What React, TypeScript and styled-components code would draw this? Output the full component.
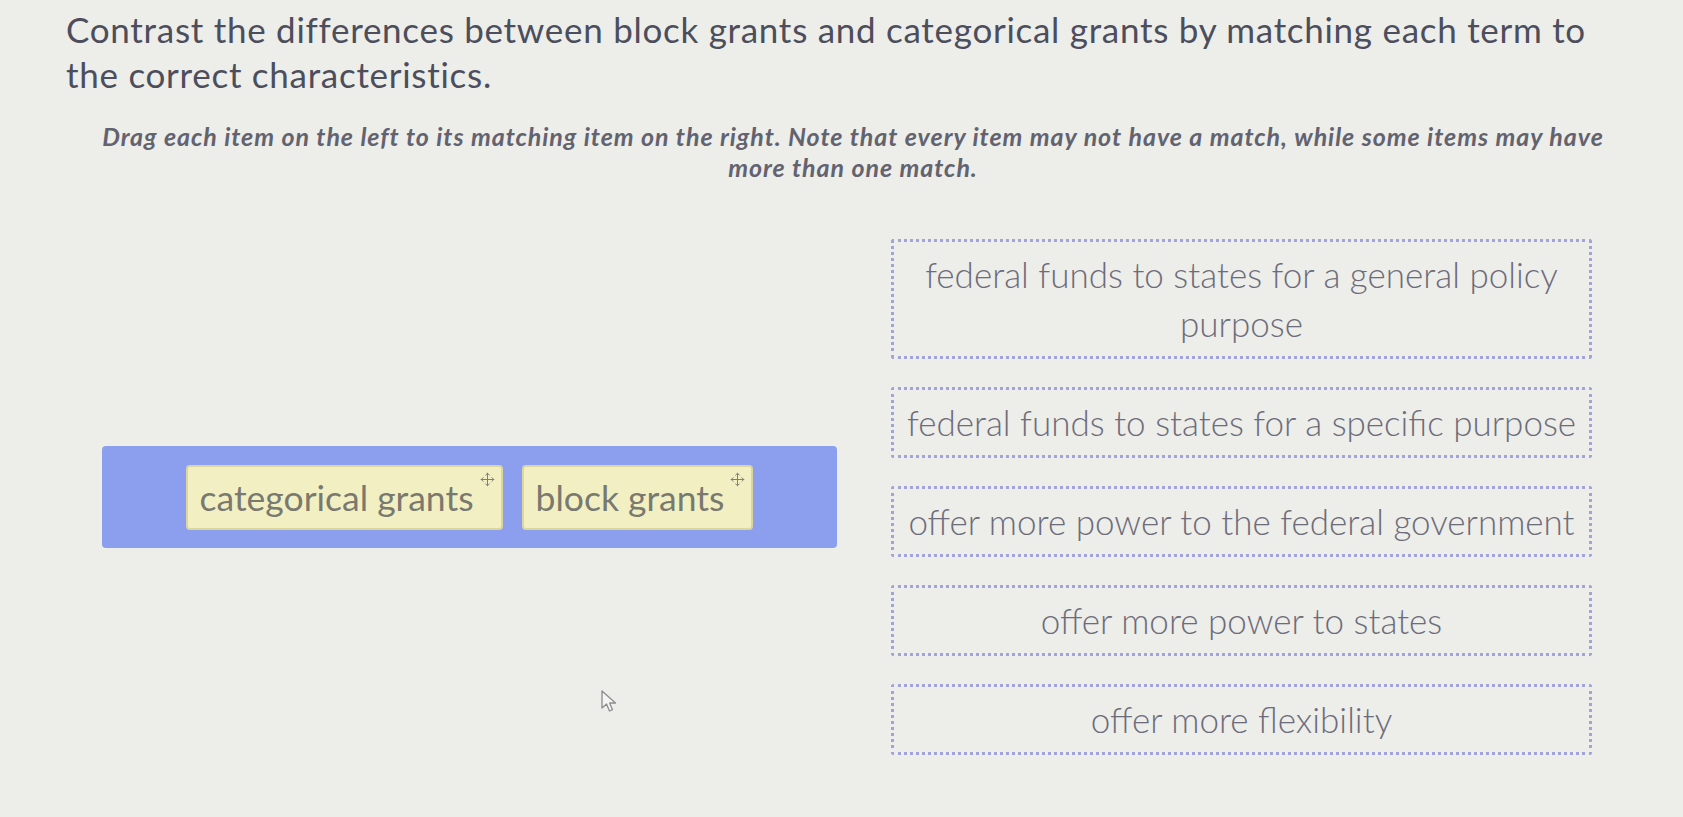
import React from 'react';
import styled, { createGlobalStyle } from 'styled-components';
import { Move } from 'lucide-react';

const GlobalStyle = createGlobalStyle`
  html, body {
    margin: 0;
    padding: 0;
    background: #ededea;
  }
  body {
    font-family: Lato, 'Open Sans', sans-serif;
  }
`;

const Page = styled.main`
  position: relative;
  width: 1574px;
  min-height: 817px;
  padding: 7px 0 0 66px;
  box-sizing: content-box;
`;

const Title = styled.h2`
  margin: 0;
  max-width: 1545px;
  font-size: 35px;
  line-height: 45px;
  letter-spacing: 0.72px;
  font-weight: 400;
  color: #4c4e5c;
`;

const Instructions = styled.p`
  margin: 24px 0 0;
  padding: 0 20px;
  text-align: center;
  font-size: 25px;
  line-height: 31px;
  letter-spacing: 0.95px;
  font-weight: 700;
  font-style: italic;
  color: #62636f;
`;

const MatchArea = styled.section`
  display: flex;
  align-items: center;
  gap: 54px;
  margin: 56px 0 0 36px;
`;

const SourceTray = styled.div`
  width: 735px;
  height: 102px;
  display: flex;
  align-items: center;
  justify-content: center;
  gap: 19px;
  background: #8b9fee;
  border-radius: 4px;
`;

const Chip = styled.div`
  position: relative;
  height: 65px;
  display: flex;
  align-items: center;
  padding: 0 27px 0 12px;
  box-sizing: border-box;
  background: #f2f0c3;
  border: 2px solid #ddd69c;
  border-radius: 4px;
  font-size: 35.5px;
  color: #797970;
  cursor: move;
`;

const ChipHandle = styled.span`
  position: absolute;
  top: 5px;
  right: 6px;
  display: flex;
  color: #7f7f79;
`;

const TargetList = styled.div`
  width: 701px;
  display: flex;
  flex-direction: column;
  gap: 28px;
`;

const DropZone = styled.div`
  padding: 8px 10px;
  border: 3px dotted #a2a3da;
  border-radius: 3px;
  text-align: center;
  font-size: 35px;
  line-height: 49px;
  font-weight: 300;
  color: #6c6c7a;
`;

const Pointer = styled.svg`
  position: absolute;
  left: 600px;
  top: 689px;
`;

const terms = ['categorical grants', 'block grants'];

const characteristics = [
  'federal funds to states for a general policy purpose',
  'federal funds to states for a specific purpose',
  'offer more power to the federal government',
  'offer more power to states',
  'offer more flexibility',
];

export default function App() {
  return (
    <>
      <GlobalStyle />
      <Page>
        <Title>
          Contrast the differences between block grants and categorical grants by
          matching each term to the correct characteristics.
        </Title>
        <Instructions>
          Drag each item on the left to its matching item on the right. Note that every
          item may not have a match, while some items may have more than one match.
        </Instructions>
        <MatchArea>
          <SourceTray>
            {terms.map((t) => (
              <Chip key={t}>
                {t}
                <ChipHandle>
                  <Move size={15} strokeWidth={1.6} />
                </ChipHandle>
              </Chip>
            ))}
          </SourceTray>
          <TargetList>
            {characteristics.map((c) => (
              <DropZone key={c}>{c}</DropZone>
            ))}
          </TargetList>
        </MatchArea>
        <Pointer width="20" height="26" viewBox="0 0 20 26">
          <path
            d="M2 2 L2 19 L6.5 15 L9.5 22 L12.5 20.7 L9.6 14 L15.5 14 Z"
            fill="#f4f4f2"
            stroke="#8d8d8d"
            strokeWidth="1.3"
            strokeLinejoin="round"
          />
        </Pointer>
      </Page>
    </>
  );
}
